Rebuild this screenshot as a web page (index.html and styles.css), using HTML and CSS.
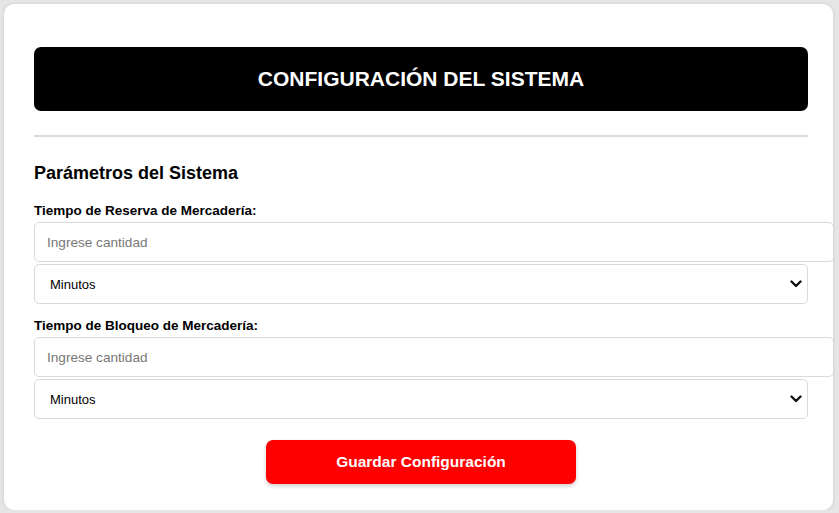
FILE: index.html
```html
<!DOCTYPE html>
<html lang="es">
<head>
<meta charset="utf-8">
<title>Configuración del Sistema</title>
<link rel="stylesheet" href="styles.css">
</head>
<body>
<div class="card">
  <h1 class="title">CONFIGURACIÓN DEL SISTEMA</h1>
  <hr class="divider">
  <h2 class="section">Parámetros del Sistema</h2>
  <form class="form">
    <div class="field">
      <label class="label">Tiempo de Reserva de Mercadería:</label>
      <input class="input" type="text" placeholder="Ingrese cantidad">
      <div class="select-wrap">
        <select class="select"><option>Minutos</option><option>Horas</option><option>Días</option></select>
        <svg class="chev" width="12" height="8" viewBox="0 0 12 8"><path d="M1.5 1.5 L6 6 L10.5 1.5" fill="none" stroke="#111" stroke-width="2.4" stroke-linecap="round" stroke-linejoin="round"/></svg>
      </div>
    </div>
    <div class="field">
      <label class="label">Tiempo de Bloqueo de Mercadería:</label>
      <input class="input" type="text" placeholder="Ingrese cantidad">
      <div class="select-wrap">
        <select class="select"><option>Minutos</option><option>Horas</option><option>Días</option></select>
        <svg class="chev" width="12" height="8" viewBox="0 0 12 8"><path d="M1.5 1.5 L6 6 L10.5 1.5" fill="none" stroke="#111" stroke-width="2.4" stroke-linecap="round" stroke-linejoin="round"/></svg>
      </div>
    </div>
    <div class="actions">
      <button class="btn" type="button">Guardar Configuración</button>
    </div>
  </form>
</div>
</body>
</html>
```

FILE: styles.css
```css
* { box-sizing: border-box; }
html, body { margin: 0; padding: 0; }
body {
  background: #e6e6e6;
  font-family: "Liberation Sans", Arial, sans-serif;
  color: #000;
  padding: 4px 6px 0 4px;
  overflow: hidden;
}
.card {
  background: #fff;
  border-radius: 10px;
  box-shadow: 0 0 4px rgba(0,0,0,0.12);
  padding: 43px 25px 27px 30px;
  height: 506px;
}
.title {
  margin: 0;
  height: 64px;
  background: #000;
  color: #fff;
  border-radius: 7px;
  font-size: 21px;
  font-weight: bold;
  display: flex;
  align-items: center;
  justify-content: center;
  letter-spacing: 0;
}
.divider {
  margin: 24px 0 0;
  border: 0;
  height: 2px;
  background: #dcdcdc;
}
.section {
  margin: 25px 0 0;
  font-size: 18px;
  line-height: 22px;
  font-weight: bold;
}
.field { margin-top: 19px; }
.field + .field { margin-top: 14px; }
.label {
  display: block;
  font-size: 13.5px;
  line-height: 16px;
  font-weight: bold;
  margin-bottom: 3px;
}
.input {
  display: block;
  box-sizing: content-box;
  width: 100%;
  height: 16px;
  padding: 11px 12px;
  border: 1px solid #d9d9d9;
  border-radius: 5px;
  font-family: "Liberation Sans", Arial, sans-serif;
  font-size: 13.6px;
  color: #000;
  background: #fff;
  outline: none;
}
.input::placeholder { color: #777; }
.select-wrap {
  position: relative;
  margin-top: 2px;
}
.select {
  display: block;
  width: 100%;
  height: 40px;
  padding: 0 12px 0 15px;
  border: 1px solid #d9d9d9;
  border-radius: 5px;
  font-family: "Liberation Sans", Arial, sans-serif;
  font-size: 13px;
  color: #000;
  background: #fff;
  appearance: none;
  -webkit-appearance: none;
  outline: none;
}
.chev {
  position: absolute;
  right: 6px;
  top: 16px;
  pointer-events: none;
}
.actions {
  display: flex;
  justify-content: center;
  margin-top: 21px;
}
.btn {
  width: 40%;
  height: 44px;
  background: #ff0000;
  color: #fff;
  border: 0;
  border-radius: 7px;
  font-family: "Liberation Sans", Arial, sans-serif;
  font-size: 15.5px;
  font-weight: bold;
  box-shadow: 0 2px 4px rgba(0,0,0,0.2);
}
```
